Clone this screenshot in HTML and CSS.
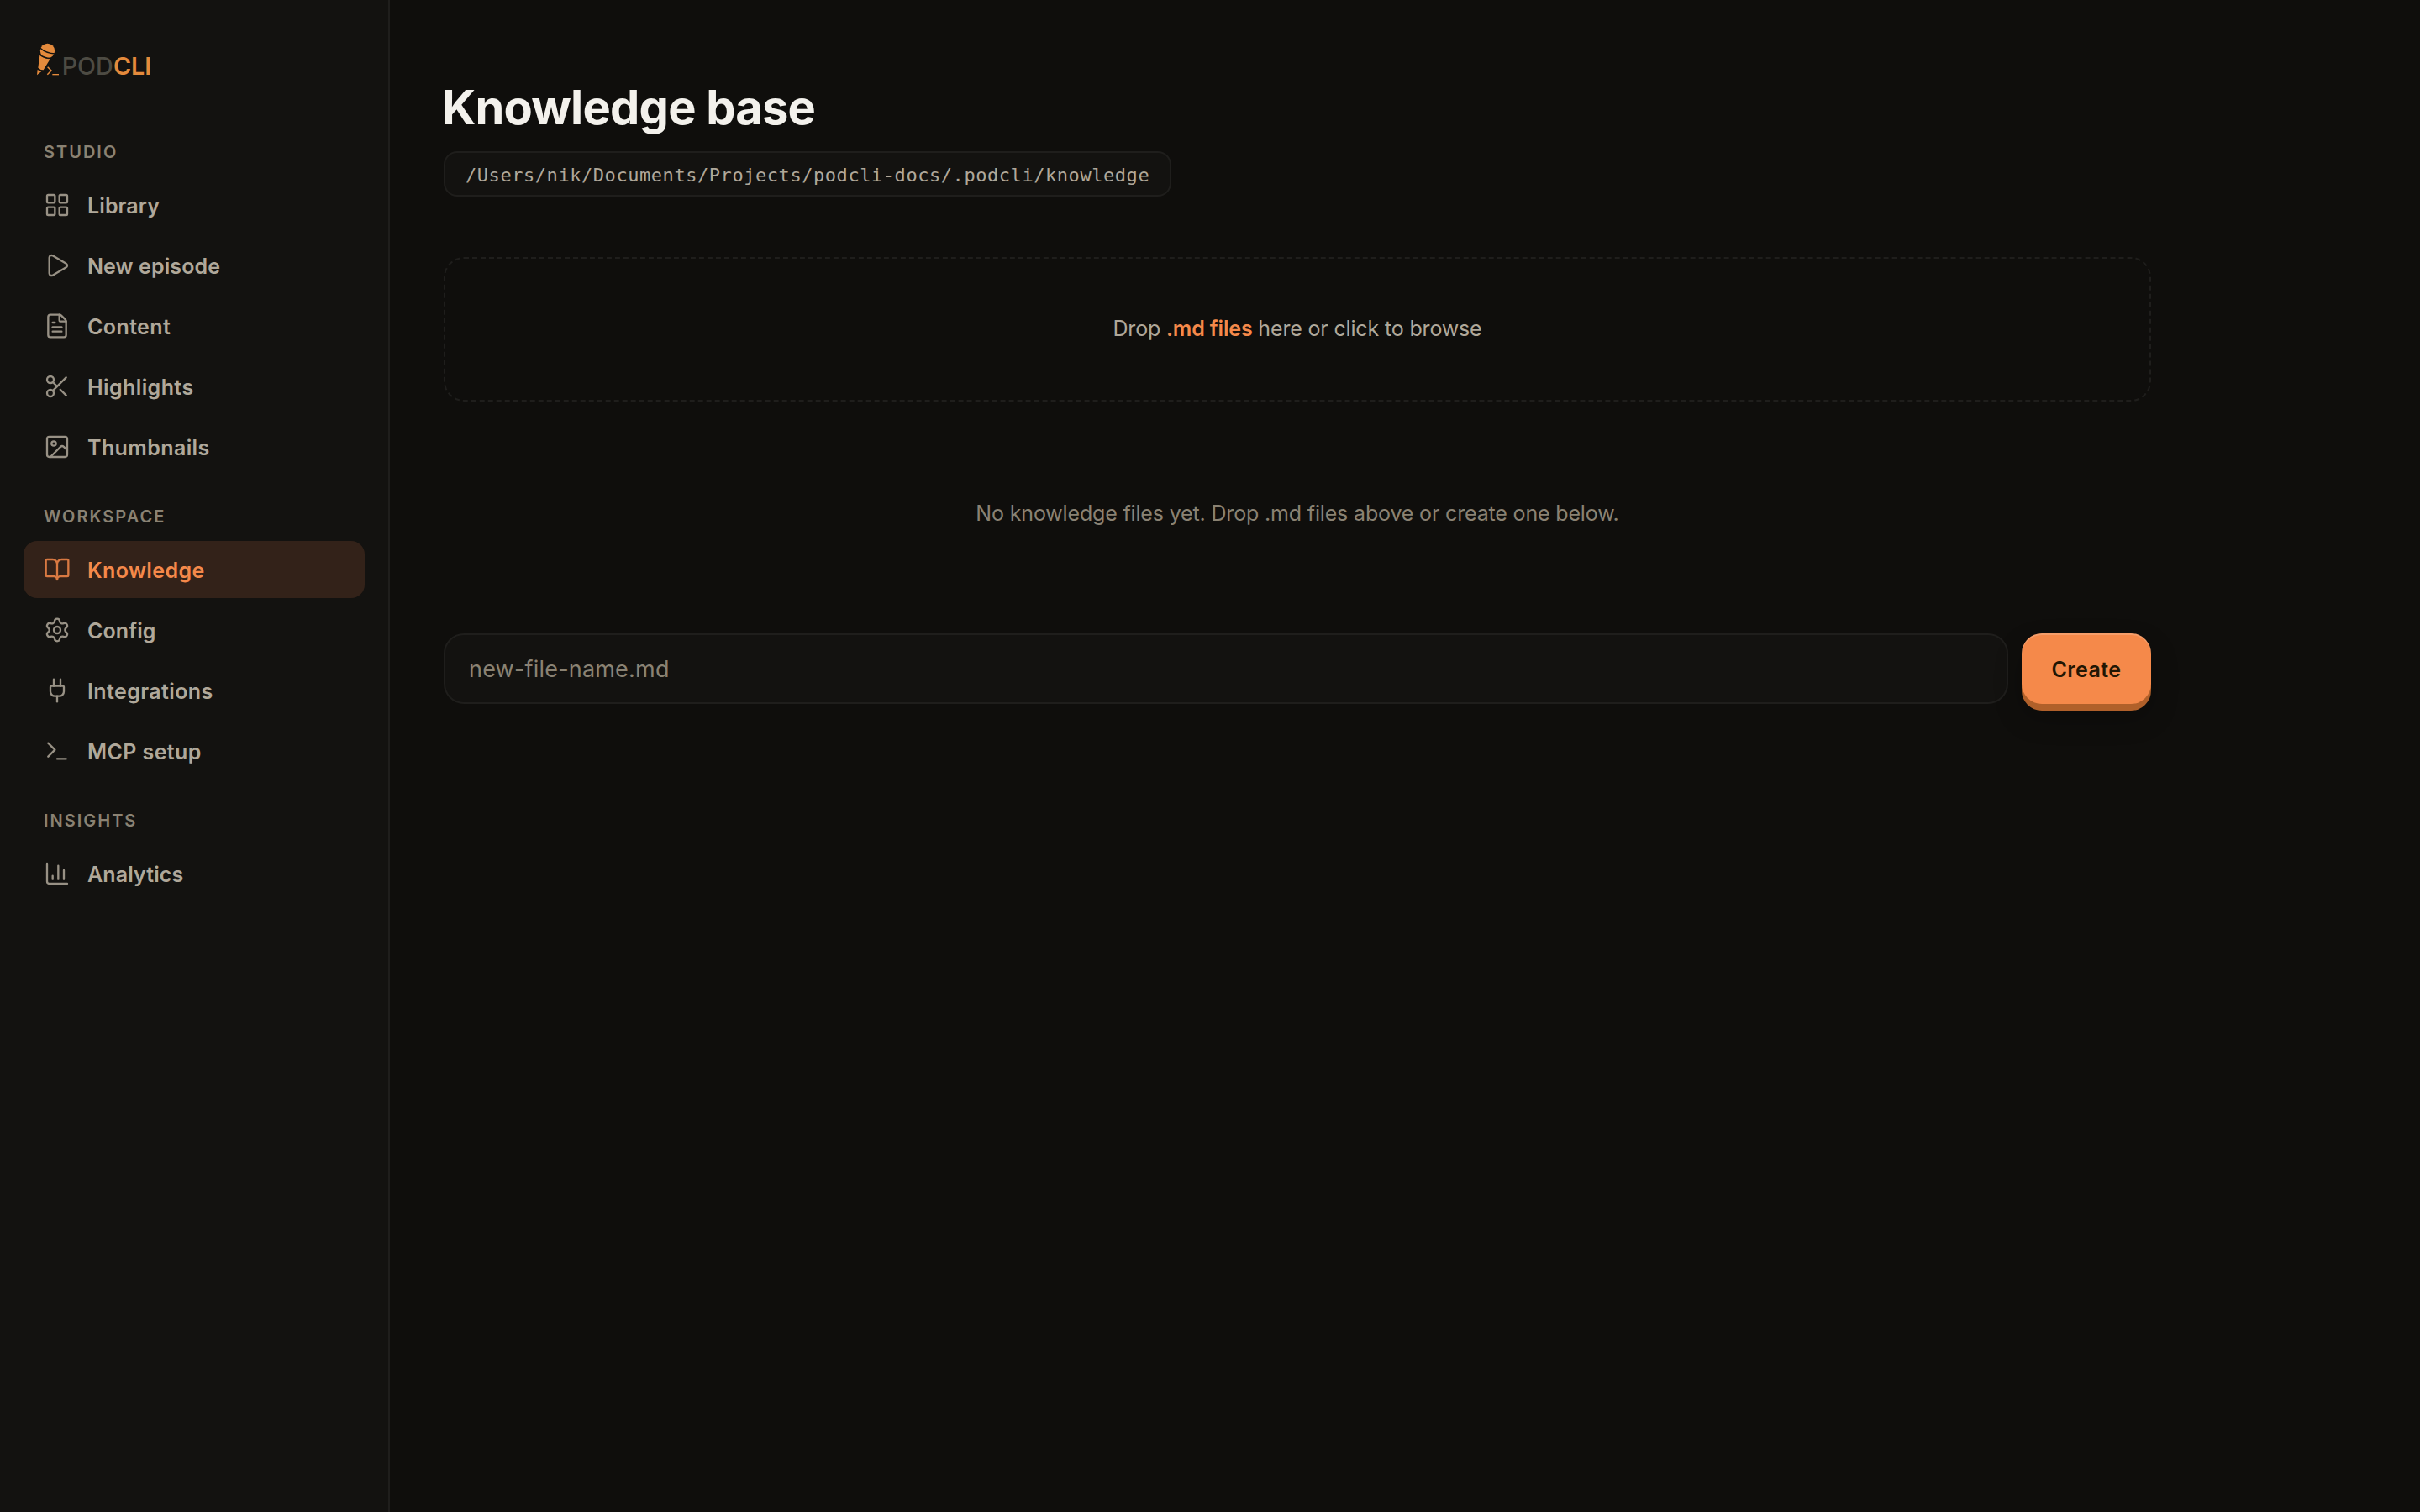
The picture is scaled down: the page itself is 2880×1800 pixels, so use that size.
FILE: index.html
```
<!DOCTYPE html>
<html lang="en">
<head>
    <meta charset="UTF-8">
    <meta name="viewport" content="width=device-width, initial-scale=1.0">
    <title>Knowledge base - podcli</title>
    <link rel="stylesheet" href="styles.css">
</head>
<body>
    <div class="app">
        <aside class="sidebar">
            <!-- Logo: microphone + prompt -->
            <svg class="logo" viewBox="60 60 420 126">
                <circle cx="109.500" cy="91.500" r="26" fill="#e48a3c"/>
                <path d="M83 81Q104 101 137 102" fill="none" stroke="#131210" stroke-width="4"/>
                <path d="M82 107Q97 120 119 121L95 160Q84 160 76 152Z" fill="#e48a3c"/>
                <path d="M82 104Q97 118 122 118" fill="none" stroke="#131210" stroke-width="4"/>
                <path d="M74 158Q79 164 88 165L72 178Z" fill="#e48a3c"/>
                <path d="M110 149L123 162L109 176" fill="none" stroke="#e48a3c" stroke-width="4.500"/>
                <path d="M127 176H150" fill="none" stroke="#e48a3c" stroke-width="4"/>
                <text class="logo-pod" x="161" y="178">POD</text>
                <text class="logo-cli" x="345" y="178">CLI</text>
            </svg>

            <nav>
                <div class="nav-group">
                    <div class="nav-label">STUDIO</div>
                    <a class="nav-item">
                        <svg class="icon" viewBox="0 0 24 24"><rect width="7" height="7" x="3" y="3" rx="1"/><rect width="7" height="7" x="14" y="3" rx="1"/><rect width="7" height="7" x="14" y="14" rx="1"/><rect width="7" height="7" x="3" y="14" rx="1"/></svg>
                        <span>Library</span>
                    </a>
                    <a class="nav-item">
                        <svg class="icon" viewBox="0 0 24 24"><path d="M5 5a2 2 0 0 1 3.008-1.728l11.997 6.998a2 2 0 0 1 .003 3.458l-12 7A2 2 0 0 1 5 19z"/></svg>
                        <span>New episode</span>
                    </a>
                    <a class="nav-item wide">
                        <svg class="icon" viewBox="0 0 24 24"><path d="M6 22a2 2 0 0 1-2-2V4a2 2 0 0 1 2-2h8a2.400 2.400 0 0 1 1.704.706l3.588 3.588A2.400 2.400 0 0 1 20 8v12a2 2 0 0 1-2 2z"/><path d="M14 2v5a1 1 0 0 0 1 1h5"/><path d="M10 9H8"/><path d="M16 13H8"/><path d="M16 17H8"/></svg>
                        <span>Content</span>
                    </a>
                    <a class="nav-item wide">
                        <svg class="icon" viewBox="0 0 24 24"><circle cx="6" cy="6" r="3"/><path d="M8.120 8.120 12 12"/><path d="M20 4 8.120 15.880"/><circle cx="6" cy="18" r="3"/><path d="M14.800 14.800 20 20"/></svg>
                        <span>Highlights</span>
                    </a>
                    <a class="nav-item wide">
                        <svg class="icon" viewBox="0 0 24 24"><rect width="18" height="18" x="3" y="3" rx="2"/><circle cx="9" cy="9" r="2"/><path d="m21 15-3.086-3.086a2 2 0 0 0-2.828 0L6 21"/></svg>
                        <span>Thumbnails</span>
                    </a>
                </div>

                <div class="nav-group">
                    <div class="nav-label">WORKSPACE</div>
                    <a class="nav-item wide active">
                        <svg class="icon" viewBox="0 0 24 24"><path d="M12 7v14"/><path d="M3 18a1 1 0 0 1-1-1V4a1 1 0 0 1 1-1h5a4 4 0 0 1 4 4 4 4 0 0 1 4-4h5a1 1 0 0 1 1 1v13a1 1 0 0 1-1 1h-6a3 3 0 0 0-3 3 3 3 0 0 0-3-3z"/></svg>
                        <span>Knowledge</span>
                    </a>
                    <a class="nav-item">
                        <svg class="icon" viewBox="0 0 24 24"><path d="M9.671 4.136a2.340 2.340 0 0 1 4.659 0 2.340 2.340 0 0 0 3.319 1.915 2.340 2.340 0 0 1 2.330 4.033 2.340 2.340 0 0 0 0 3.831 2.340 2.340 0 0 1-2.330 4.033 2.340 2.340 0 0 0-3.319 1.915 2.340 2.340 0 0 1-4.659 0 2.340 2.340 0 0 0-3.320-1.915 2.340 2.340 0 0 1-2.330-4.033 2.340 2.340 0 0 0 0-3.831A2.340 2.340 0 0 1 6.350 6.051a2.340 2.340 0 0 0 3.319-1.915"/><circle cx="12" cy="12" r="3"/></svg>
                        <span>Config</span>
                    </a>
                    <a class="nav-item wide">
                        <svg class="icon" viewBox="0 0 24 24"><path d="M12 22v-5"/><path d="M15 8V2"/><path d="M17 8a1 1 0 0 1 1 1v4a4 4 0 0 1-4 4h-4a4 4 0 0 1-4-4V9a1 1 0 0 1 1-1z"/><path d="M9 8V2"/></svg>
                        <span>Integrations</span>
                    </a>
                    <a class="nav-item wide">
                        <svg class="icon" viewBox="0 0 24 24"><path d="M12 19h8"/><path d="m4 17 6-6-6-6"/></svg>
                        <span>MCP setup</span>
                    </a>
                </div>

                <div class="nav-group">
                    <div class="nav-label">INSIGHTS</div>
                    <a class="nav-item">
                        <svg class="icon" viewBox="0 0 24 24"><path d="M3 3v16a2 2 0 0 0 2 2h16"/><path d="M18 17V9"/><path d="M13 17V5"/><path d="M8 17v-3"/></svg>
                        <span>Analytics</span>
                    </a>
                </div>
            </nav>
        </aside>

        <main class="main">
            <h1>Knowledge base</h1>
            <div class="path">/Users/nik/Documents/Projects/podcli-docs/.podcli/knowledge</div>

            <div class="dropzone">
                <p>Drop <strong>.md files</strong> here or click to browse</p>
            </div>

            <p class="empty">No knowledge files yet. Drop .md files above or create one below.</p>

            <form class="create-row">
                <input type="text" class="file-name" placeholder="new-file-name.md">
                <button type="button" class="create-btn">Create</button>
            </form>
        </main>
    </div>
</body>
</html>
```

FILE: styles.css
```
* {
    box-sizing: border-box;
}

body {
    margin: 0;
    background: #0f0e0c;
    color: #f3f1ec;
    font-family: "Inter", "Liberation Sans", sans-serif;
    font-size: 25px;
}

.app {
    display: flex;
    min-height: 100vh;
}

/* Sidebar */
.sidebar {
    width: 464px;
    flex-shrink: 0;
    padding: 50px 28px 0;
    background: #131210;
    border-right: 2px solid #1f1e1c;
}

.logo {
    display: block;
    width: 140px;
    height: 42px;
    margin: 0 0 76px 12px;
    overflow: visible;
}

.logo-pod,
.logo-cli {
    font-size: 86px;
    font-weight: 500;
    fill: #4d4b43;
}

.logo-cli {
    font-weight: 600;
    fill: #e48a3c;
}

.nav-group {
    display: flex;
    flex-direction: column;
    gap: 4px;
    margin-bottom: 36px;
}

.nav-label {
    height: 26px;
    margin-bottom: 12px;
    padding-left: 24px;
    line-height: 26px;
    font-size: 20px;
    font-weight: 600;
    letter-spacing: 2px;
    color: #8a8273;
}

.nav-item {
    display: flex;
    align-items: center;
    gap: 20px;
    width: 406px;
    height: 68px;
    padding: 0 24px;
    border-radius: 16px;
    font-weight: 600;
    letter-spacing: 0.1px;
    color: #b0a89a;
}

.nav-item.wide {
    letter-spacing: 0.4px;
}

.nav-item span {
    padding-top: 1px;
}

.nav-item.active {
    background: #332219;
    color: #f5894a;
}

.icon {
    width: 32px;
    height: 32px;
    fill: none;
    stroke: currentColor;
    stroke-width: 1.75;
    stroke-linecap: round;
    stroke-linejoin: round;
    opacity: 0.85;
}

/* Main */
.main {
    width: 2160px;
    padding: 97px 64px 0;
}

h1 {
    margin: 0 0 21px -2px;
    font-size: 56px;
    line-height: 62px;
    font-weight: 700;
    letter-spacing: -0.8px;
}

.path {
    width: fit-content;
    height: 54px;
    padding: 2px 24px 0;
    border: 2px solid #1f1e1c;
    border-radius: 16px;
    background: #131210;
    font-family: "DejaVu Sans Mono", monospace;
    font-size: 22px;
    line-height: 49px;
    letter-spacing: 0.555px;
    color: #b0a89a;
}

.dropzone {
    display: flex;
    align-items: center;
    justify-content: center;
    height: 172px;
    margin-top: 72px;
    padding-bottom: 2px;
    border: 2px dashed #1f1e1c;
    border-radius: 24px;
    color: #b0a89a;
    letter-spacing: -0.16px;
}

.dropzone p {
    margin: 0;
}

.dropzone strong {
    font-weight: 600;
    color: #f5894a;
}

.empty {
    margin: 0;
    padding: 113px 0 123px;
    line-height: 40px;
    text-align: center;
    letter-spacing: -0.16px;
    color: #8a8273;
}

.create-row {
    display: flex;
    gap: 16px;
}

.file-name {
    flex: 1;
    height: 84px;
    padding: 0 28px;
    border: 2px solid #1f1e1c;
    border-radius: 24px;
    background: #131210;
    color: #f3f1ec;
    font-family: inherit;
    font-size: 27px;
    letter-spacing: 0.2px;
}

.file-name::placeholder {
    color: #8a8273;
}

.create-btn {
    width: 154px;
    height: 84px;
    padding: 2px 0 0;
    border: none;
    border-radius: 24px;
    background: #f5894a;
    box-shadow: inset 0 2px 0 rgba(255, 255, 255, 0.18), 0 8px 0 #b0602a, 0 16px 32px rgba(0, 0, 0, 0.25);
    color: #221604;
    font-family: inherit;
    font-size: 25px;
    font-weight: 600;
    letter-spacing: 0.4px;
}
```
